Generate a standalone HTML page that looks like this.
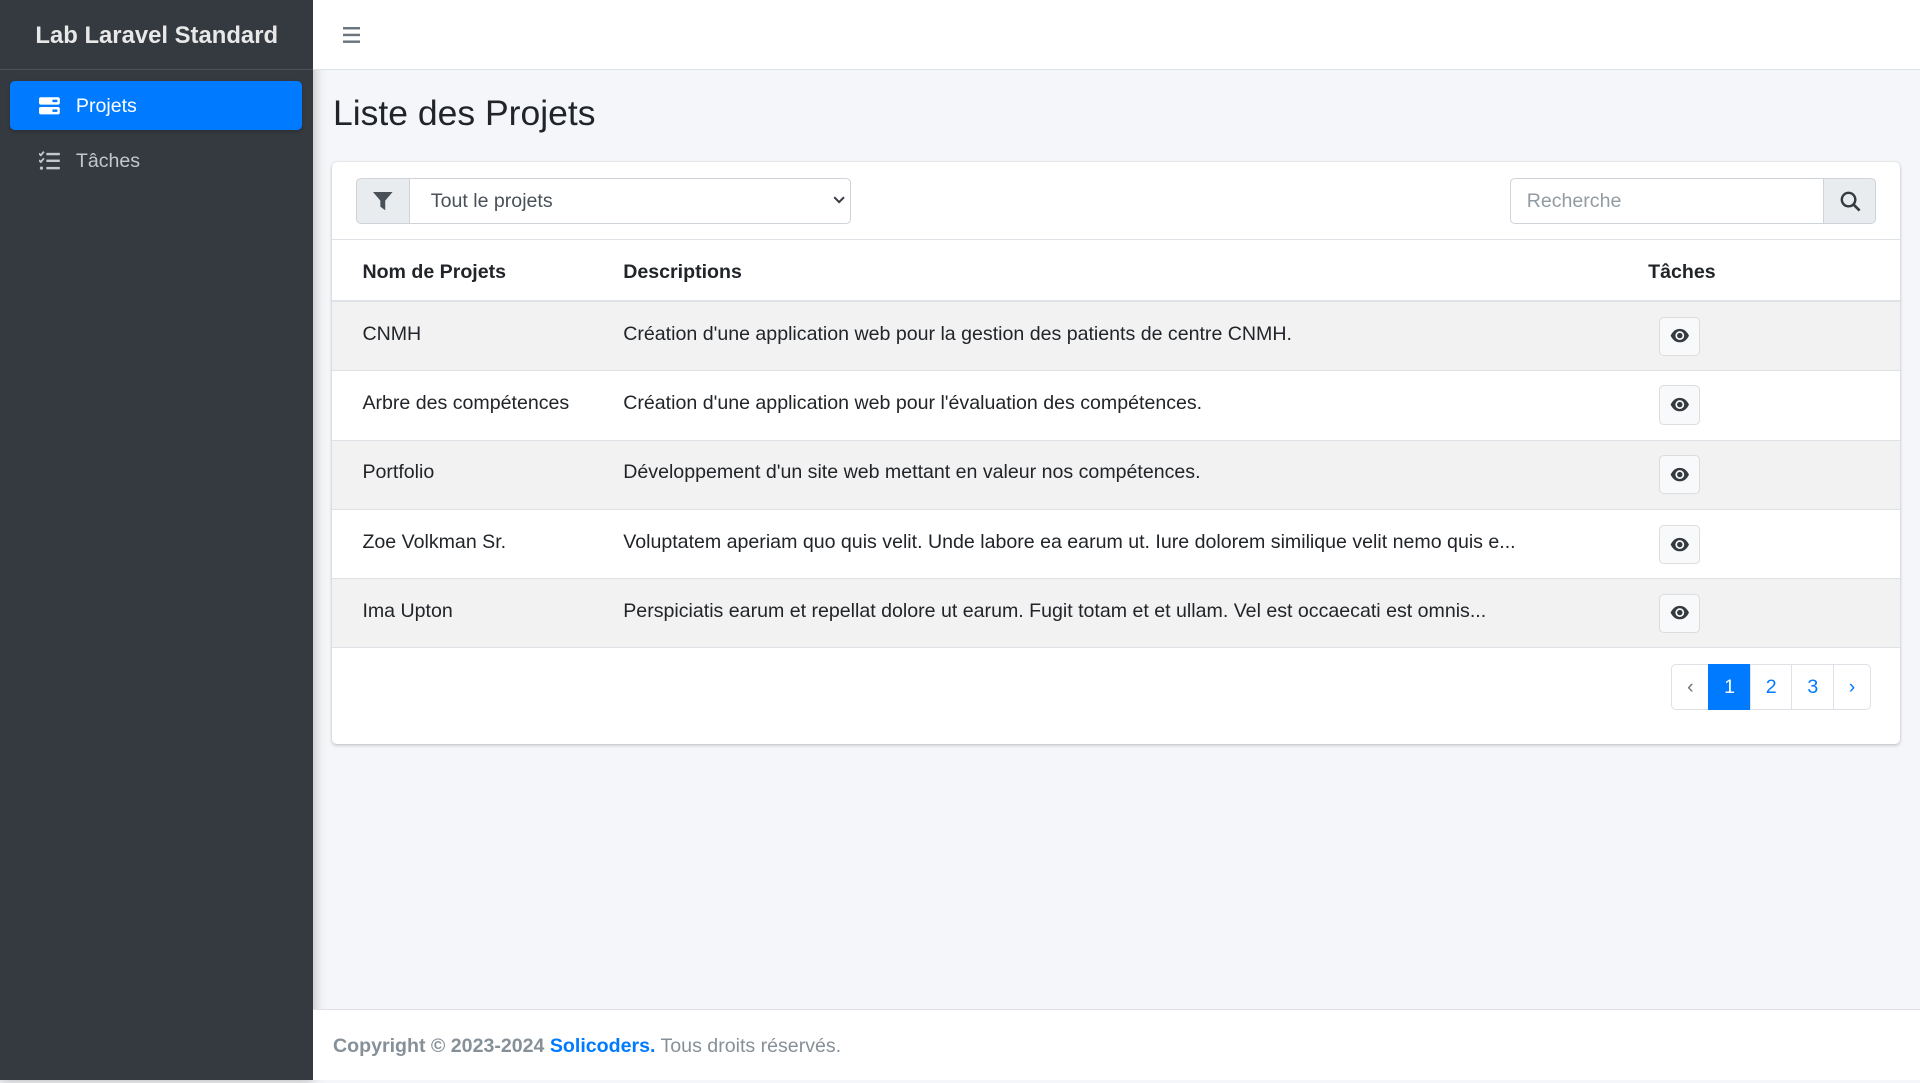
<!DOCTYPE html>
<html><head><meta charset="utf-8"><style>
html,body{margin:0;padding:0}
body{zoom:1.22449;width:1568px;height:882px;position:relative;overflow:hidden;background:#f4f6f9;font-family:"Liberation Sans",sans-serif;font-size:16px;color:#212529}
.side{position:absolute;left:0;top:0;width:256px;height:882px;background:#343a40;box-shadow:0 0 10px rgba(0,0,0,.3)}
.brand{height:57px;border-bottom:1px solid #4b545c;color:#e8e8e8;font-weight:bold;font-size:19.5px;text-align:center;line-height:59px;box-sizing:border-box}
.nav{position:absolute;left:8px;width:239px;height:40px;border-radius:4px;color:#c2c7d0;line-height:42px;font-size:16px}
.nav.act{background:#007bff;color:#fff;box-shadow:0 1px 3px rgba(0,0,0,.2)}
.nav svg{position:absolute;left:24px;top:12px}
.nav span{position:absolute;left:54px}
.hdr{position:absolute;left:256px;top:0;right:0;height:57px;background:#fff;border-bottom:1px solid #dee2e6;box-sizing:border-box}
h1{position:absolute;left:272px;top:73px;margin:0;font-size:29px;font-weight:normal;line-height:40px}
.card{position:absolute;left:271px;top:132px;width:1281px;height:476px;background:#fff;border-radius:4px;box-shadow:0 0 1px rgba(0,0,0,.13),0 1px 3px rgba(0,0,0,.2)}
.ch{position:absolute;left:0;top:0;width:100%;height:63px;border-bottom:1px solid #dee2e6}
.abs{position:absolute;box-sizing:border-box}
.row{position:absolute;left:0;width:1281px;border-top:1px solid #dee2e6;box-sizing:border-box}
.row div{position:absolute;top:17px}
.c1{left:25px}.c2{left:238px}
.eye{position:absolute;left:1084px;top:12px!important;width:33px;height:32px;background:#f8f9fa;border:1px solid #ddd;border-radius:4px;box-sizing:border-box}
.eye svg{position:absolute;left:8px;top:8px}
.pg{position:absolute;top:542px;height:38px;line-height:37px;text-align:center;border:1px solid #dee2e6;box-sizing:border-box;color:#007bff;background:#fff}
.foot{position:absolute;left:256px;top:824px;right:0;height:58px;background:#fff;border-top:1px solid #dee2e6;color:#869099;line-height:60px;padding-left:16px;box-sizing:border-box}
</style></head><body>
<div class="side">
 <div class="brand">Lab Laravel Standard</div>
 <div class="nav act" style="top:66px"><svg width="17" height="16" viewBox="0 0 17 16"><rect x="0" y="1" width="17" height="6" rx="1.5" fill="#fff"/><rect x="0" y="9" width="17" height="6" rx="1.5" fill="#fff"/><rect x="11" y="3" width="4" height="2" fill="#007bff"/><rect x="11" y="11" width="4" height="2" fill="#007bff"/></svg><span>Projets</span></div>
 <div class="nav" style="top:111px"><svg width="17" height="16" viewBox="0 0 17 16" fill="#c2c7d0"><path d="M0 2l1.5 1.5L4 0.5" stroke="#c2c7d0" stroke-width="1.5" fill="none"/><path d="M0 7.5l1.5 1.5L4 6" stroke="#c2c7d0" stroke-width="1.5" fill="none"/><circle cx="2" cy="14" r="1.3"/><rect x="6" y="1.5" width="11" height="2"/><rect x="6" y="7" width="11" height="2"/><rect x="6" y="13" width="11" height="2"/></svg><span>Tâches</span></div>
</div>
<div class="hdr"><svg style="position:absolute;left:24px;top:22px" width="14" height="13"><rect y="0" width="14" height="2" fill="#6c757d"/><rect y="5.5" width="14" height="2" fill="#6c757d"/><rect y="11" width="14" height="2" fill="#6c757d"/></svg></div>
<h1>Liste des Projets</h1>
<div class="card">
 <div class="ch">
  <div class="abs" style="left:20px;top:13px;width:44px;height:38px;background:#e9ecef;border:1px solid #ced4da;border-radius:4px 0 0 4px"><svg style="position:absolute;left:13px;top:11px" width="16" height="15" viewBox="0 0 16 15"><path d="M0 0h16l-6 7v8l-4-3V7z" fill="#495057"/></svg></div>
  <div class="abs" style="left:63px;top:13px;width:361px;height:38px;border:1px solid #ced4da;border-radius:0 4px 4px 0;line-height:37px;padding-left:17px;color:#495057">Tout le projets<svg style="position:absolute;right:4px;top:14px" width="10" height="7"><path d="M1 1l4 4 4-4" stroke="#343a40" stroke-width="1.6" fill="none"/></svg></div>
  <div class="abs" style="left:962px;top:13px;width:257px;height:38px;border:1px solid #ced4da;border-radius:4px 0 0 4px;line-height:37px;padding-left:13px;color:#939ba2">Recherche</div>
  <div class="abs" style="left:1218px;top:13px;width:43px;height:38px;background:#e9ecef;border:1px solid #ced4da;border-radius:0 4px 4px 0"><svg style="position:absolute;left:13px;top:10px" width="17" height="17" viewBox="0 0 17 17"><circle cx="7" cy="7" r="5.5" stroke="#343a40" stroke-width="2" fill="none"/><path d="M11 11l5 5" stroke="#343a40" stroke-width="2.2"/></svg></div>
 </div>
 <div class="row" style="top:64px;height:50px;border:none;font-weight:bold"><div class="c1" style="top:17px">Nom de Projets</div><div class="c2" style="top:17px">Descriptions</div><div style="left:1075px;top:17px">Tâches</div></div>
 <div class="row" style="top:113px;height:57px;background:#f2f2f2;border-top:2px solid #dee2e6"><div class="c1">CNMH</div><div class="c2">Création d'une application web pour la gestion des patients de centre CNMH.</div><div class="eye"><svg width="16" height="14" viewBox="0 0 16 14"><path d="M0.5 7C2.5 3 5 1.5 8 1.5S13.5 3 15.5 7C13.5 11 11 12.5 8 12.5S2.5 11 0.5 7z" fill="#343a40"/><circle cx="8" cy="7" r="3.6" fill="#f8f9fa"/><circle cx="8" cy="7" r="2.2" fill="#343a40"/></svg></div></div>
 <div class="row" style="top:170px;height:57px"><div class="c1">Arbre des compétences</div><div class="c2">Création d'une application web pour l'évaluation des compétences.</div><div class="eye"><svg width="16" height="14" viewBox="0 0 16 14"><path d="M0.5 7C2.5 3 5 1.5 8 1.5S13.5 3 15.5 7C13.5 11 11 12.5 8 12.5S2.5 11 0.5 7z" fill="#343a40"/><circle cx="8" cy="7" r="3.6" fill="#f8f9fa"/><circle cx="8" cy="7" r="2.2" fill="#343a40"/></svg></div></div>
 <div class="row" style="top:227px;height:57px;background:#f2f2f2"><div class="c1">Portfolio</div><div class="c2">Développement d'un site web mettant en valeur nos compétences.</div><div class="eye"><svg width="16" height="14" viewBox="0 0 16 14"><path d="M0.5 7C2.5 3 5 1.5 8 1.5S13.5 3 15.5 7C13.5 11 11 12.5 8 12.5S2.5 11 0.5 7z" fill="#343a40"/><circle cx="8" cy="7" r="3.6" fill="#f8f9fa"/><circle cx="8" cy="7" r="2.2" fill="#343a40"/></svg></div></div>
 <div class="row" style="top:284px;height:56px"><div class="c1">Zoe Volkman Sr.</div><div class="c2">Voluptatem aperiam quo quis velit. Unde labore ea earum ut. Iure dolorem similique velit nemo quis e...</div><div class="eye"><svg width="16" height="14" viewBox="0 0 16 14"><path d="M0.5 7C2.5 3 5 1.5 8 1.5S13.5 3 15.5 7C13.5 11 11 12.5 8 12.5S2.5 11 0.5 7z" fill="#343a40"/><circle cx="8" cy="7" r="3.6" fill="#f8f9fa"/><circle cx="8" cy="7" r="2.2" fill="#343a40"/></svg></div></div>
 <div class="row" style="top:340px;height:57px;background:#f2f2f2;border-bottom:1px solid #dee2e6"><div class="c1">Ima Upton</div><div class="c2">Perspiciatis earum et repellat dolore ut earum. Fugit totam et et ullam. Vel est occaecati est omnis...</div><div class="eye"><svg width="16" height="14" viewBox="0 0 16 14"><path d="M0.5 7C2.5 3 5 1.5 8 1.5S13.5 3 15.5 7C13.5 11 11 12.5 8 12.5S2.5 11 0.5 7z" fill="#343a40"/><circle cx="8" cy="7" r="3.6" fill="#f8f9fa"/><circle cx="8" cy="7" r="2.2" fill="#343a40"/></svg></div></div>
</div>
<div class="pg" style="left:1365px;width:31px;border-radius:4px 0 0 4px;color:#6c757d">‹</div>
<div class="pg" style="left:1395px;width:35px;background:#007bff;border-color:#007bff;color:#fff">1</div>
<div class="pg" style="left:1429px;width:35px">2</div>
<div class="pg" style="left:1463px;width:35px">3</div>
<div class="pg" style="left:1497px;width:31px;border-radius:0 4px 4px 0">›</div>
<div class="foot"><b style="color:#869099">Copyright © 2023-2024 </b><b style="color:#007bff">Solicoders.</b> Tous droits réservés.</div>
</body></html>
